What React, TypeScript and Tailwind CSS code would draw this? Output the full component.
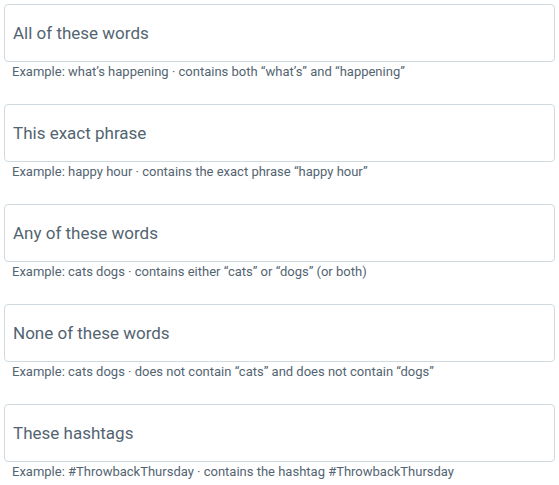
import React from "react";

const items = [
  { label: "All of these words", help: "Example: what’s happening · contains both “what’s” and “happening”" },
  { label: "This exact phrase", help: "Example: happy hour · contains the exact phrase “happy hour”" },
  { label: "Any of these words", help: "Example: cats dogs · contains either “cats” or “dogs” (or both)" },
  { label: "None of these words", help: "Example: cats dogs · does not contain “cats” and does not contain “dogs”" },
  { label: "These hashtags", help: "Example: #ThrowbackThursday · contains the hashtag #ThrowbackThursday" },
];

export default function App() {
  return (
    <div className="w-[559px] h-[485px] bg-white p-1 flex flex-col gap-[24px]" style={{ fontFamily: "Roboto, 'Noto Sans', sans-serif" }}>
      {items.map((it) => (
        <div key={it.label} className="flex flex-col">
          <div className="h-[58px] border border-[#cfd9de] rounded-[4px] flex items-center px-2 pt-[2px] text-[17px] text-[#536471]">
            {it.label}
          </div>
          <div className="mt-[2px] px-2 text-[13px] leading-[16px] text-[#536471]">{it.help}</div>
        </div>
      ))}
    </div>
  );
}
